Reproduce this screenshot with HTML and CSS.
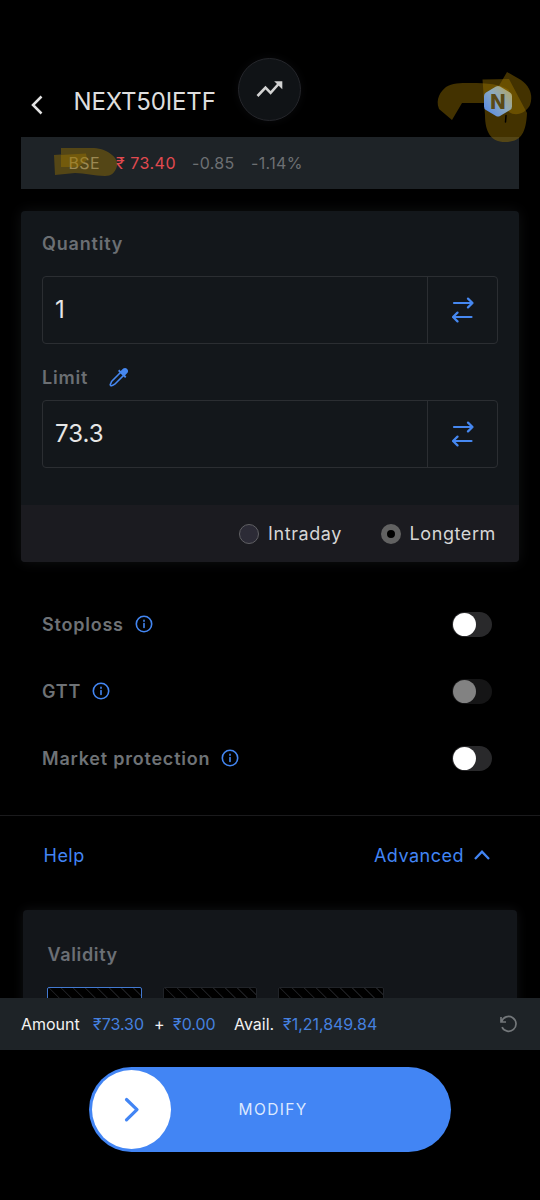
FILE: index.html
```html
<!DOCTYPE html>
<html lang="en">
<head>
<meta charset="utf-8">
<title>Modify order</title>
<link rel="stylesheet" href="styles.css">
</head>
<body>
<div class="app">
  <main class="content">
    <header class="header">
      <svg class="back" width="14" height="22" viewBox="0 0 14 22"><path d="M12.500 2.500 4 11l8.500 8.500"/></svg>
      <h1 class="title"><span>NEXT50IETF</span></h1>
      <div class="chart-btn">
        <svg width="28" height="28" viewBox="0 0 28 28"><path class="trend" d="M1.500 20 9.500 11.700 14.600 16.800 23 7.500"/><path class="trend-head" d="M18.200 5.200H26.300V13.300Z"/></svg>
      </div>
    </header>

    <div class="ticker">
      <span class="exchange">BSE</span><span class="price">₹ 73.40</span><span class="change">-0.85</span><span class="percent">-1.14%</span>
    </div>

    <section class="card">
      <div class="fields">
        <div class="label"><span>Quantity</span></div>
        <div class="field">
          <div class="value">1</div>
          <div class="swap"><svg width="22" height="26" viewBox="0 0 22 26"><path d="M2 6H20.500M16 1.600 20.500 6 16 10.400M19.500 20H1M5.500 15.600 1 20 5.500 24.400"/></svg></div>
        </div>
        <div class="label label-limit"><span>Limit</span>
          <svg class="dropper" width="20" height="20" viewBox="0 0 20 20"><path class="tube" d="M12 5 3 14C2 15 2.200 16.200 1.300 17.200 1 18.200 1.800 19 2.800 18.700 3.800 17.800 5 18 6 17L15 8"/><path class="bulb" d="M9 3.900 10.300 2.600 11.700 3.900 14.200 1.500C17 -.5 20.500 3 18.500 5.800L16.100 8.300 17.400 9.700 16.100 11Z"/></svg>
        </div>
        <div class="field">
          <div class="value">73.3</div>
          <div class="swap"><svg width="22" height="26" viewBox="0 0 22 26"><path d="M2 6H20.500M16 1.600 20.500 6 16 10.400M19.500 20H1M5.500 15.600 1 20 5.500 24.400"/></svg></div>
        </div>
      </div>
      <div class="products">
        <div class="product"><i class="radio"></i><span>Intraday</span></div>
        <div class="product"><i class="radio checked"></i><span>Longterm</span></div>
      </div>
    </section>

    <section class="options">
      <div class="option"><span>Stoploss</span><svg class="info" width="18" height="18" viewBox="0 0 18 18"><circle cx="9" cy="9" r="7.700"/><path d="M9 8.500V12.500M9 5.300V6.300"/></svg><i class="toggle"></i></div>
      <div class="option"><span>GTT</span><svg class="info" width="18" height="18" viewBox="0 0 18 18"><circle cx="9" cy="9" r="7.700"/><path d="M9 8.500V12.500M9 5.300V6.300"/></svg><i class="toggle disabled"></i></div>
      <div class="option"><span>Market protection</span><svg class="info" width="18" height="18" viewBox="0 0 18 18"><circle cx="9" cy="9" r="7.700"/><path d="M9 8.500V12.500M9 5.300V6.300"/></svg><i class="toggle"></i></div>
    </section>

    <nav class="links">
      <span class="help">Help</span>
      <span class="advanced">Advanced</span>
      <svg class="chev-up" width="18" height="12" viewBox="0 0 18 12"><path d="M2 10 9 2.700 16 10"/></svg>
    </nav>

    <section class="validity">
      <div class="validity-label"><span>Validity</span></div>
      <div class="choices">
        <div class="choice selected"></div>
        <div class="choice"></div>
        <div class="choice wide"></div>
      </div>
    </section>
  </main>

  <div class="summary">
    <span class="amount">Amount</span><span class="num n1">₹73.30</span><span class="plus">+</span><span class="num n2">₹0.00</span><span class="avail">Avail.</span><span class="num n3">₹1,21,849.84</span>
    <svg class="refresh" width="20" height="20" viewBox="0 0 20 20"><path d="M2 3V8H7M2.600 7.500A7.400 7.400 0 1 1 3 13.200"/></svg>
  </div>

  <footer class="footer">
    <div class="slide">
      <div class="knob"><svg width="18" height="26" viewBox="0 0 18 26"><path d="M3.500 2.500 14 12.700 3.500 22.800"/></svg></div>
      <span class="modify">MODIFY</span>
    </div>
  </footer>

  <svg class="marks" width="540" height="200" viewBox="0 0 540 200">
    <defs><linearGradient id="hex" x1="0.1" y1="0.8" x2="0.9" y2="0.1"><stop offset="0" stop-color="#5f8fe0"/><stop offset=".5" stop-color="#8ba9c0"/><stop offset="1" stop-color="#b0a66a"/></linearGradient></defs>
    <g class="ink">
      <path d="M61 148H94C108 149 119 158 117 166 115 173 111 176 105 176 94 176 85 173 75 173L55 175 54 155 61 154.500Z"/>
      <path d="M61 155 86 153.500 87 160 78 167H61Z"/>
      <path d="M452 120 439 109C435 99 441 91 446 87 452 83 460 83 470 83 488 83 500 84 509 90L507 103H462Z"/>
      <path d="M482.500 79.500 509 79 527 113C526 133 521 142 505 142 491 142 485 132 485 115Z"/>
      <path d="M507 72 521 80C531 87 533 97 530 105 526 113 516 117 509 112L493 96Z"/>
    </g>
    <path fill="url(#hex)" d="M496 86.600Q498 85.400 500 86.600L510 92.500Q512 93.700 512 96V106.500Q512 108.800 510 110L500 116Q498 117.200 496 116L486 110Q484 108.800 484 106.500V96Q484 93.700 486 92.500Z"/>
    <path class="pen" d="M506 115.500 505.500 122"/>
    <text class="badge" x="490.300" y="108.500">N</text>
  </svg>
</div>
</body>
</html>
```
FILE: styles.css
```css
* { box-sizing: border-box; }
body { margin: 0; background: #000; font-family: Inter, "Noto Sans", sans-serif; color: #dcdcdc; }
svg { display: block; flex: none; fill: none; stroke-linecap: round; stroke-linejoin: round; }
span { white-space: nowrap; }
.app { position: relative; width: 540px; height: 1200px; overflow: hidden; display: flex; flex-direction: column; }
.content { height: 998px; overflow: hidden; flex: none; }

.header { height: 137px; padding: 58px 0 0 29px; display: flex; align-items: flex-start; }
.back { margin-top: 36px; stroke: #e2e2e2; stroke-width: 2.5; stroke-linecap: butt; stroke-linejoin: miter; }
.title { margin: 29px 0 0 30.5px; width: 164.5px; font-size: 24px; line-height: 30px; font-weight: 400; letter-spacing: -.15px; color: #dedede; }
.chart-btn { width: 63px; height: 63px; border-radius: 50%; background: #101316; border: 1.5px solid #25262b; display: flex; align-items: center; justify-content: center; box-shadow: 0 0 10px #0a0b0d; }
.trend { stroke: #d2d2d2; stroke-width: 2.6; stroke-linecap: butt; stroke-linejoin: miter; }
.trend-head { fill: #d2d2d2; }

.ticker { height: 52px; margin: 0 21px; padding-left: 47.5px; background: #1e2327; display: flex; align-items: center; font-size: 16px; letter-spacing: .35px; color: #6d7073; }
.exchange { width: 47.5px; color: #9a978e; }
.price { width: 76px; color: #e24a50; letter-spacing: .5px; }
.change { width: 59px; }

.card { margin: 22px 21px 0; height: 351px; border-radius: 4px; background: #13171b; box-shadow: 0 0 14px #101113; overflow: hidden; }
.fields { height: 294px; padding: 21px 21px 0; }
.label { height: 44px; display: flex; align-items: flex-start; font-size: 18px; line-height: 24px; font-weight: 600; letter-spacing: .8px; color: #6b6f73; }
.field { height: 68px; border: 1px solid #2b2e32; border-radius: 4px; display: flex; }
.value { flex: 1; padding-left: 12px; font-size: 24px; line-height: 66px; color: #e6e6e6; }
.swap { width: 70px; border-left: 1px solid #2b2e32; display: flex; align-items: center; justify-content: center; }
.swap svg { stroke: #4688f1; stroke-width: 2.2; }
.label-limit { height: 56px; padding-top: 22px; }
.dropper { margin: 1px 0 0 21px; }
.tube { stroke: #4688f1; stroke-width: 1.6; }
.bulb { fill: #4688f1; }
.products { height: 57px; padding-right: 23px; background: #1b1b20; display: flex; align-items: center; justify-content: flex-end; gap: 39px; font-size: 18px; letter-spacing: .6px; color: #d6d6d6; }
.product { display: flex; align-items: center; gap: 8.5px; }
.radio { width: 20px; height: 20px; border-radius: 50%; border: 1.5px solid #606064; background: #2c2b36; }
.radio.checked { border: 6px solid #626262; background: #000; }

.options { padding: 29px 48px 0 42px; }
.option { height: 67px; display: flex; align-items: center; font-size: 18px; font-weight: 600; letter-spacing: .78px; color: #6e7276; }
.info { margin: -1px 0 0 11px; stroke: #4386f2; stroke-width: 1.6; }
.toggle { margin-left: auto; width: 40px; height: 25px; border-radius: 13px; background: #29292b; display: flex; align-items: center; padding-left: 1px; }
.toggle::before { content: ""; width: 23px; height: 23px; border-radius: 50%; background: #fff; }
.toggle.disabled { background: #151516; }
.toggle.disabled::before { background: #828282; }

.links { height: 95px; margin-top: 23px; padding: 0 49px 16px 43.5px; border-top: 1px solid #1a1a1c; display: flex; align-items: center; font-size: 18px; letter-spacing: .5px; color: #4285f4; }
.advanced { margin-left: auto; }
.chev-up { margin-left: 9px; stroke: #4285f4; stroke-width: 2.3; stroke-linecap: butt; stroke-linejoin: miter; }

.validity { margin: 0 23px; height: 120px; padding: 32px 24px 0; border-radius: 4px; background: #13161a; box-shadow: 0 0 12px #111214; }
.validity-label { height: 45px; padding-left: .5px; font-size: 18px; line-height: 25px; font-weight: 600; letter-spacing: .65px; color: #6b6f75; }
.choices { display: flex; gap: 21px; }
.choice { width: 94px; height: 48px; border: 1px solid #202328; border-radius: 2px; background: repeating-linear-gradient(45deg, #000 0 7px, #1c1d20 7.500px 8.300px, #000 8.500px); }
.choice.selected { width: 95px; border: 1.5px solid #4279d1; }
.choice.wide { width: 106px; }

.summary { position: relative; height: 52px; flex: none; padding: 0 21px 0 21px; background: #1e2327; display: flex; align-items: center; font-size: 16px; letter-spacing: -.02px; color: #f2f2f2; }
.amount { width: 72px; }
.num { color: #4580df; }
.n1 { width: 61px; }
.plus { width: 19px; }
.n2 { width: 61px; }
.avail { width: 49px; }
.refresh { margin-left: auto; stroke: #73777a; stroke-width: 1.7; stroke-linecap: butt; stroke-linejoin: miter; }

.footer { flex: 1; padding: 17px 89px 0; }
.slide { height: 85px; border-radius: 43px; padding-left: 3px; background: #4285f4; display: flex; align-items: center; }
.knob { width: 79px; height: 79px; border-radius: 50%; background: #fff; display: flex; align-items: center; justify-content: center; }
.knob svg { stroke: #4285f4; stroke-width: 3.2; }
.modify { margin: 0 0 0 67.5px; font-size: 15.5px; letter-spacing: 1.4px; color: #dce9ff; }

.marks { position: absolute; left: 0; top: 0; pointer-events: none; }
.ink { fill: #a07800; fill-opacity: .42; }
.pen { stroke: #000; stroke-width: 1.5; }
.badge { font: 800 20px Inter, sans-serif; fill: #5a4a16; }
```
